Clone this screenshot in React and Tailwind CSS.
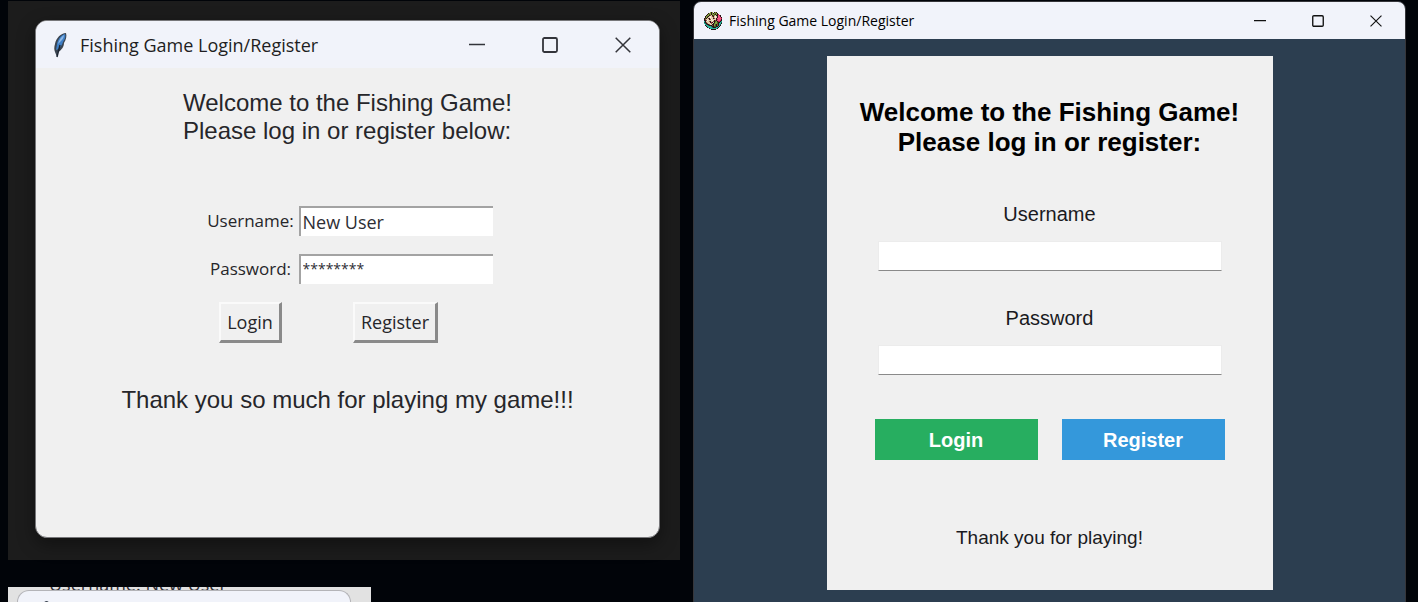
import React from "react";

const PALETTE = {
  k: "#2a1216",
  g: "#86a440",
  d: "#4c6424",
  c: "#e3cfae",
  b: "#8a5238",
  p: "#f0507f",
  r: "#b01f45",
  t: "#27b59c",
  n: "#14685c",
  w: "#fff3e4",
};

const ANGLER = [
  "......gkg.kgk.....",
  "....kggkgkgdgk....",
  "...kgdgkggdkgkr...",
  "..kggkbckdgckkprk.",
  ".kgdkcwcbkcwckppk.",
  ".kgkccwccbcwckpppk",
  "kdkcbkccckbckpppprk",
  "kbccckbwcccckrpppk",
  "kkbwccccwckbkppprk",
  "tkcccbkccbkdgkrrkt",
  "nkbccckrkckggdkktn",
  "tnkbcccbckdggdkttk",
  ".tnkkbcckkgdkbktn.",
  ".kttnkkkbkgdkbktk.",
  "..kttttnkkddkktk..",
  "...kttttnkkkttk...",
  ".....ktttttttk....",
  ".......kkkkk......",
];

function AnglerIcon() {
  return (
    <svg viewBox="0 0 18 18" className="size-[18px] shrink-0" shapeRendering="crispEdges" aria-hidden="true">
      {ANGLER.flatMap((row, y) =>
        [...row].map((code, x) =>
          code === "." ? null : (
            <rect key={`${x}-${y}`} x={x} y={y} width="1" height="1" fill={PALETTE[code]} />
          )
        )
      )}
    </svg>
  );
}

function FeatherIcon() {
  return (
    <svg viewBox="0 0 16 26" className="h-[26px] w-4 shrink-0" aria-hidden="true">
      <path d="M14 1C9 1 4 6 3 12C2 15 2 18 3 20L5 25L6 20C10 18 12 14 12 11C14 8 15 4 14 1Z" fill="#3a4450" />
      <path d="M13 2C9 3 6 7 5 12L4 18C8 17 10 13 11 10C13 7 14 4 13 2Z" fill="#3f7fc6" />
      <path d="M12 3C9 5 7 8 6 12L8 10C10 8 12 6 12 3Z" fill="#8db8e6" />
      <path d="M8 13C7 17 6 21 5 25" fill="none" stroke="#1b2430" strokeWidth="1.4" />
    </svg>
  );
}

function WindowControls({ large }) {
  const button = large
    ? "flex h-full w-[73px] items-center justify-center"
    : "flex h-full w-[58px] items-center justify-center";
  const icon = large ? "size-4" : "size-3";
  const stroke = large ? "#33343a" : "#111";
  return (
    <div className="flex h-full">
      <button type="button" aria-label="Minimize" className={button}>
        <svg viewBox="0 0 16 16" className={icon} fill="none" stroke={stroke} strokeWidth="1.5">
          <path d="M0 7.5H16" />
        </svg>
      </button>
      <button type="button" aria-label="Maximize" className={button}>
        <svg viewBox="0 0 16 16" className={icon} fill="none" stroke={stroke} strokeWidth="1.8">
          <rect x="1" y="1" width="14" height="14" rx="1.5" />
        </svg>
      </button>
      <button type="button" aria-label="Close" className={button}>
        <svg viewBox="0 0 16 16" className={icon} fill="none" stroke={stroke} strokeWidth="1.5">
          <path d="M.7 .7L15.3 15.3M15.3 .7L.7 15.3" />
        </svg>
      </button>
    </div>
  );
}

const classicInput =
  "h-[30px] w-[194px] border-t-2 border-l-2 border-[#a3a3a3] bg-white pl-[2px] text-[#2e2e34] outline-none";
const classicButton =
  "h-[41px] border-t-2 border-r-3 border-b-3 border-l-2 border-t-[#fafafa] border-r-[#8a8a8a] border-b-[#8a8a8a] border-l-[#fafafa] bg-[#f0f0f0] px-[6px] text-lg";

function ClassicWindow() {
  return (
    <section className="bg-[#1c1c1c] pt-[19px] pr-5 pb-[22px] pl-[27px]">
      <div className="min-h-[518px] overflow-hidden rounded-xl border border-[#77777a] bg-[#f0f0f0] shadow-[0_6px_18px_rgba(0,0,0,0.4)]">
        <header className="flex h-[47px] items-center justify-between bg-[#f1f3fa] font-['Open_Sans',sans-serif] text-[#1e1e22]">
          <div className="flex items-center gap-3 pl-4">
            <FeatherIcon />
            <h1 className="text-lg whitespace-nowrap">Fishing Game Login/Register</h1>
          </div>
          <WindowControls large />
        </header>
        <form
          className="flex flex-col items-center font-['Liberation_Sans',sans-serif] text-[#26262a]"
          onSubmit={(e) => e.preventDefault()}
        >
          <p className="mt-[21px] text-2xl leading-7">
            Welcome to the Fishing Game!
            <br />
            Please log in or register below:
          </p>
          <div className="mt-[61px] ml-1 grid grid-cols-[88px_194px] items-center justify-items-center gap-x-1 gap-y-[18px] font-['Open_Sans',sans-serif] text-[17px]">
            <label htmlFor="classic-user">Username:</label>
            <input id="classic-user" type="text" defaultValue="New User" className={`${classicInput} text-lg`} />
            <label htmlFor="classic-pass">Password:</label>
            <input id="classic-pass" type="text" defaultValue="********" className={`${classicInput} pb-1 text-sm`} />
            <button type="submit" className={classicButton}>Login</button>
            <button type="button" className={classicButton}>Register</button>
          </div>
          <p className="mt-[43px] text-2xl leading-7">Thank you so much for playing my game!!!</p>
        </form>
      </div>
    </section>
  );
}

function CroppedWindow() {
  return (
    <section className="mt-[27px] flex w-[363px] flex-1 flex-col overflow-hidden bg-[#e2e2e2] pr-5 pl-[9px]">
      <p className="flex h-[3px] shrink-0 items-end overflow-hidden pl-8 font-['Open_Sans',sans-serif] text-lg leading-3 text-[#2e2e34]">
        Username: New User
      </p>
      <div className="min-h-3 flex-1 overflow-hidden rounded-t-xl border border-b-0 border-[#b4b4b8] bg-[#f1f3fa] pt-[10px] pl-[26px]">
        <div className="h-2 w-[5px] rounded-t-full bg-[#3a4450]" />
      </div>
    </section>
  );
}

const flatInput = "mt-[15px] h-[30px] w-full border border-[#ececec] border-b-[#8a8a8a] bg-white px-1 outline-none";
const flatLabel = "text-center text-xl leading-6";

function ModernWindow() {
  return (
    <section className="flex flex-1 flex-col overflow-hidden rounded-lg border border-[#36363a] bg-[#2c3e50]">
      <header className="flex h-[37px] items-center justify-between bg-[#f1f3fa] font-['Open_Sans',sans-serif] text-black">
        <div className="flex items-center gap-[7px] pl-[10px]">
          <AnglerIcon />
          <h1 className="text-sm whitespace-nowrap">Fishing Game Login/Register</h1>
        </div>
        <WindowControls />
      </header>
      <form
        className="mx-auto mt-[17px] mb-[11px] flex w-[446px] flex-col bg-[#f0f0f0] px-12 pt-[41px] pb-10 font-['Liberation_Sans',sans-serif] text-[#1a1a1e]"
        onSubmit={(e) => e.preventDefault()}
      >
        <h2 className="-mx-6 text-center text-[26px] leading-[30px] font-bold text-black">
          Welcome to the Fishing Game!
          <br />
          Please log in or register:
        </h2>
        <div className="mt-[45px] flex flex-col px-[3px]">
          <label htmlFor="modern-user" className={flatLabel}>Username</label>
          <input id="modern-user" type="text" className={flatInput} />
        </div>
        <div className="mt-[35px] flex flex-col px-[3px]">
          <label htmlFor="modern-pass" className={flatLabel}>Password</label>
          <input id="modern-pass" type="password" className={flatInput} />
        </div>
        <div className="mt-11 grid grid-cols-2 gap-6 text-xl font-bold text-white">
          <button type="submit" className="h-[41px] bg-[#27ae60]">Login</button>
          <button type="button" className="h-[41px] bg-[#3498db]">Register</button>
        </div>
        <p className="mt-[66px] text-center text-[19px] leading-6">Thank you for playing!</p>
      </form>
    </section>
  );
}

export default function App() {
  return (
    <main className="grid min-h-screen grid-cols-[672fr_713fr] gap-[13px] bg-[#010409] pt-px pr-3 pl-2">
      <div className="flex flex-col">
        <ClassicWindow />
        <CroppedWindow />
      </div>
      <div className="flex flex-col">
        <ModernWindow />
      </div>
    </main>
  );
}
